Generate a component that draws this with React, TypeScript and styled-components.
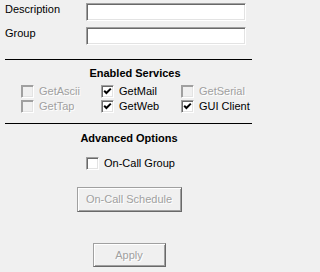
import styled, { createGlobalStyle } from "styled-components";

const GlobalStyle = createGlobalStyle`
  html, body {
    margin: 0;
    padding: 0;
    background: #f0f0f0;
  }
  body {
    font-family: "Liberation Sans", Arial, sans-serif;
    font-size: 11px;
    line-height: 13px;
    color: #000;
  }
`;

type Service = { name: string; checked: boolean; enabled: boolean };

const services: Service[] = [
  { name: "GetAscii", checked: false, enabled: false },
  { name: "GetMail", checked: true, enabled: true },
  { name: "GetSerial", checked: false, enabled: false },
  { name: "GetTap", checked: false, enabled: false },
  { name: "GetWeb", checked: true, enabled: true },
  { name: "GUI Client", checked: true, enabled: true },
];

const CheckMark = () => (
  <svg width="9" height="9" viewBox="0 0 9 9">
    <polyline
      points="1.2,3.8 3.4,6 7.8,1.6"
      fill="none"
      stroke="#000"
      strokeWidth="2"
    />
  </svg>
);

const CheckItem = ({ label, checked, enabled }: { label: string; checked: boolean; enabled: boolean }) => (
  <CheckLabel $enabled={enabled}>
    <Box $enabled={enabled}>{checked && <CheckMark />}</Box>
    <span>{label}</span>
  </CheckLabel>
);

const App = () => {
  return (
    <>
      <GlobalStyle />
      <Page>
        <FormGrid>
          <FieldLabel>Description</FieldLabel>
          <TextField />
          <FieldLabel>Group</FieldLabel>
          <TextField />
        </FormGrid>
        <Divider $gap={14} />
        <SectionTitle $shift={15} $gap={7}>Enabled Services</SectionTitle>
        <ServiceGrid>
          {services.map((s) => (
            <CheckItem key={s.name} label={s.name} checked={s.checked} enabled={s.enabled} />
          ))}
        </ServiceGrid>
        <Divider $gap={10} />
        <SectionTitle $shift={3} $gap={8}>Advanced Options</SectionTitle>
        <OptionRow>
          <CheckItem label="On-Call Group" checked={false} enabled={true} />
        </OptionRow>
        <ButtonRow $gap={17}>
          <WinButton disabled $w={105} $h={25}>On-Call Schedule</WinButton>
        </ButtonRow>
        <ButtonRow $gap={31}>
          <WinButton disabled $w={73} $h={24}>Apply</WinButton>
        </ButtonRow>
      </Page>
    </>
  );
};
export default App;

const Page = styled.div`
  width: 255px;
  height: 272px;
  display: flex;
  flex-direction: column;
  overflow: hidden;
`;

const FormGrid = styled.div`
  display: grid;
  grid-template-columns: 81px 160px;
  row-gap: 6px;
  padding: 3px 0 0 5px;
`;

const FieldLabel = styled.div`
  align-self: start;
`;

const TextField = styled.div`
  box-sizing: border-box;
  height: 18px;
  background: #fff;
  border: 1px solid;
  border-color: #a0a0a0 #fff #fff #a0a0a0;
  box-shadow: inset 1px 1px 0 #696969, inset -1px -1px 0 #e3e3e3;
`;

const Divider = styled.div<{ $gap: number }>`
  margin: ${(p) => p.$gap}px 0 0 5px;
  width: 247px;
  height: 1px;
  background: #000;
`;

const SectionTitle = styled.div<{ $shift: number; $gap: number }>`
  margin-top: ${(p) => p.$gap}px;
  padding-left: ${(p) => p.$shift}px;
  text-align: center;
  font-weight: bold;
`;

const ServiceGrid = styled.div`
  display: grid;
  grid-template-columns: repeat(3, 80px);
  row-gap: 2px;
  margin-top: 5px;
  padding-left: 21px;
`;

const CheckLabel = styled.label<{ $enabled: boolean }>`
  display: flex;
  align-items: center;
  gap: 5px;
  height: 13px;
  color: ${(p) => (p.$enabled ? "#000" : "#a0a0a0")};
  text-shadow: ${(p) => (p.$enabled ? "none" : "1px 1px 0 #fff")};
  white-space: nowrap;
`;

const Box = styled.span<{ $enabled: boolean }>`
  box-sizing: border-box;
  width: 13px;
  height: 13px;
  flex: none;
  display: flex;
  align-items: center;
  justify-content: center;
  background: ${(p) => (p.$enabled ? "#fff" : "#f0f0f0")};
  border: 1px solid;
  border-color: #a0a0a0 #fff #fff #a0a0a0;
  box-shadow: inset 1px 1px 0 ${(p) => (p.$enabled ? "#696969" : "#a0a0a0")},
    inset -1px -1px 0 #e3e3e3;
`;

const OptionRow = styled.div`
  margin-top: 12px;
  padding-left: 86px;
`;

const ButtonRow = styled.div<{ $gap: number }>`
  margin-top: ${(p) => p.$gap}px;
  display: flex;
  justify-content: center;
  padding-left: 3px;
`;

const WinButton = styled.button<{ $w: number; $h: number }>`
  box-sizing: border-box;
  width: ${(p) => p.$w}px;
  height: ${(p) => p.$h}px;
  padding: 0;
  font: inherit;
  background: #f0f0f0;
  color: #a0a0a0;
  text-shadow: 1px 1px 0 #fff;
  border: 1px solid;
  border-color: #a0a0a0 #696969 #696969 #a0a0a0;
  box-shadow: inset 1px 1px 0 #fff, inset -1px -1px 0 #a0a0a0;
`;
